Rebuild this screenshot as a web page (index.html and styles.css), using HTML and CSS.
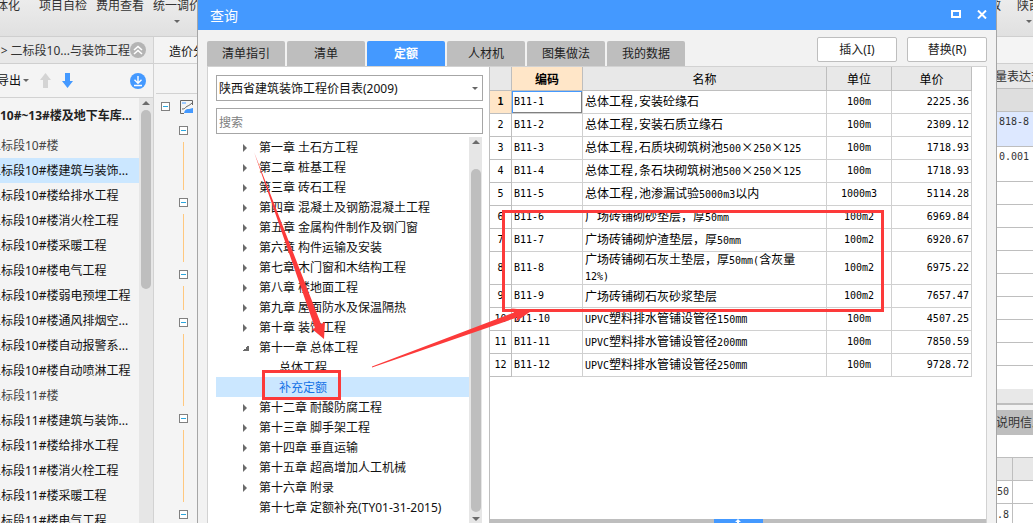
FILE: index.html
```html
<!DOCTYPE html>
<html lang="zh-CN">
<head>
<meta charset="utf-8">
<title>查询</title>
<link rel="stylesheet" href="styles.css">
</head>
<body>
<div class="app">
  <header class="ribbon">
    <div class="ribbon-items">
      <span class="ribbon-item">体化</span>
      <span class="ribbon-item">项目自检</span>
      <span class="ribbon-item">费用查看</span>
      <span class="ribbon-item">统一调价<i class="caret"></i></span>
    </div>
    <div class="ribbon-items ribbon-end">
      <span class="ribbon-item">效</span>
      <span class="ribbon-item">陕西<i class="caret"></i></span>
    </div>
  </header>
  <div class="workspace">
    <nav class="project">
      <div class="crumb">
        <span class="crumb-text">&gt; 二标段10...与装饰工程</span>
        <button class="round" aria-label="收起"><svg width="16" height="16" viewBox="0 0 16 16"><circle cx="8" cy="8" r="8" fill="#b4b4b4"/><path d="M4 8l4-3.5L12 8M4 12l4-3.5 4 3.5" fill="none" stroke="#fff" stroke-width="1.6"/></svg></button>
      </div>
      <div class="tools">
        <button class="export">导出<i class="caret"></i></button>
        <button class="round" aria-label="上移"><svg width="11" height="15" viewBox="0 0 11 15"><path d="M5.500 0L11 7H8v8H3V7H0z" fill="#d4d4d4"/></svg></button>
        <button class="round" aria-label="下移"><svg width="11" height="15" viewBox="0 0 11 15"><path d="M5.500 15L11 8H8V0H3v8H0z" fill="#4499ff"/></svg></button>
        <button class="round last" aria-label="下载"><svg width="16" height="16" viewBox="0 0 16 16"><circle cx="8" cy="8" r="8" fill="#4499ff"/><path d="M8 3v7M4.500 6.800L8 10.200l3.500-3.400M4 12.500h8" fill="none" stroke="#fff" stroke-width="1.400"/></svg></button>
      </div>
      <div class="project-body">
        <ul class="project-list">
          <li class="root">10#~13#楼及地下车库...</li>
          <li class="group">二标段10#楼</li>
          <li class="active">二标段10#楼建筑与装饰...</li>
          <li>二标段10#楼给排水工程</li>
          <li>二标段10#楼消火栓工程</li>
          <li>二标段10#楼采暖工程</li>
          <li>二标段10#楼电气工程</li>
          <li>二标段10#楼弱电预埋工程</li>
          <li>二标段10#楼通风排烟空...</li>
          <li>二标段10#楼自动报警系...</li>
          <li>二标段10#楼自动喷淋工程</li>
          <li class="group">二标段11#楼</li>
          <li>二标段11#楼建筑与装饰...</li>
          <li>二标段11#楼给排水工程</li>
          <li>二标段11#楼消火栓工程</li>
          <li>二标段11#楼采暖工程</li>
          <li>二标段11#楼电气工程</li>
        </ul>
        <div class="scroll"><i class="scroll-up"></i><i class="thumb thumb-short"></i></div>
      </div>
    </nav>
    <section class="outline">
      <div class="outline-tab">造价分析</div>
      <div class="outline-head"></div>
      <div class="outline-root">
        <i class="toggle"></i>
        <svg width="14" height="14" viewBox="0 0 14 14"><path d="M4 13.500H.500V.500h12V5" fill="none" stroke="#666"/><path d="M2 2h4v2H2z" fill="#9cc9ff"/><path d="M4 13c1-4 3-4 5-4s2-1 4-1v5z" fill="#4499ff"/><path d="M2 9c3 0 3-1 4-2s3-1 6-4" fill="none" stroke="#666"/></svg>
      </div>
      <div class="outline-tree">
        <i class="toggle"></i><i class="branch b2"></i>
        <i class="toggle"></i><i class="branch b2"></i>
        <i class="toggle"></i><i class="branch b1"></i>
        <i class="toggle"></i><i class="branch b3"></i>
        <i class="toggle"></i><i class="branch b3"></i>
        <i class="toggle"></i>
      </div>
    </section>
    <section class="side">
      <div class="side-bar"></div>
      <div class="side-head">量表达式</div>
      <div class="side-sub"></div>
      <div class="side-cell blue"><span class="m">818-8</span></div>
      <div class="side-cell"><span class="m">0.001</span></div>
      <div class="side-row"></div><div class="side-row"></div><div class="side-row"></div>
      <div class="side-row"></div><div class="side-row"></div><div class="side-row"></div>
      <div class="side-row"></div><div class="side-row"></div><div class="side-row plain"></div>
      <div class="side-scroll"></div>
      <div class="side-title">说明信息</div>
      <div class="side-gap"></div>
      <div class="mini head"><span></span><span></span></div>
      <div class="mini"><span class="m">50</span><span></span></div>
      <div class="mini"><span class="m">.8</span><span></span></div>
    </section>
  </div>
</div>

<div class="dialog" role="dialog" aria-labelledby="dlg-title">
  <div class="titlebar">
    <h1 id="dlg-title">查询</h1>
    <button class="win" aria-label="最大化"><svg width="10" height="8" viewBox="0 0 10 8"><path d="M1 1h8v6H1z" fill="none" stroke="#fff" stroke-width="2"/></svg></button>
    <button class="win" aria-label="关闭"><svg width="10" height="9" viewBox="0 0 10 9"><path d="M1 .500l8 8M9 .500l-8 8" stroke="#fff" stroke-width="2"/></svg></button>
  </div>
  <div class="dialog-top">
    <div class="tabs" role="tablist">
      <button class="tab" role="tab">清单指引</button>
      <button class="tab" role="tab">清单</button>
      <button class="tab on" role="tab" aria-selected="true">定额</button>
      <button class="tab" role="tab">人材机</button>
      <button class="tab" role="tab">图集做法</button>
      <button class="tab" role="tab">我的数据</button>
    </div>
    <div class="actions">
      <button class="action">插入(I)</button>
      <button class="action">替换(R)</button>
    </div>
  </div>
  <div class="panes">
    <div class="catalog">
      <div class="fields">
        <div class="book">
          <select class="field" aria-label="定额库"><option>陕西省建筑装饰工程价目表(2009)</option></select>
          <i class="caret"></i>
        </div>
        <input class="field" type="text" placeholder="搜索" aria-label="搜索">
      </div>
      <div class="tree-wrap">
        <ul class="tree">
          <li><i class="closed"></i>第一章 土石方工程</li>
          <li><i class="closed"></i>第二章 桩基工程</li>
          <li><i class="closed"></i>第三章 砖石工程</li>
          <li><i class="closed"></i>第四章 混凝土及钢筋混凝土工程</li>
          <li><i class="closed"></i>第五章 金属构件制作及钢门窗</li>
          <li><i class="closed"></i>第六章 构件运输及安装</li>
          <li><i class="closed"></i>第七章 木门窗和木结构工程</li>
          <li><i class="closed"></i>第八章 楼地面工程</li>
          <li><i class="closed"></i>第九章 屋面防水及保温隔热</li>
          <li><i class="closed"></i>第十章 装饰工程</li>
          <li><i class="open"></i>第十一章 总体工程</li>
          <li class="child">总体工程</li>
          <li class="child picked">补充定额</li>
          <li><i class="closed"></i>第十二章 耐酸防腐工程</li>
          <li><i class="closed"></i>第十三章 脚手架工程</li>
          <li><i class="closed"></i>第十四章 垂直运输</li>
          <li><i class="closed"></i>第十五章 超高增加人工机械</li>
          <li><i class="closed"></i>第十六章 附录</li>
          <li><i class="none"></i>第十七章 定额补充(TY01-31-2015)</li>
        </ul>
        <div class="scroll tree-scroll"><i class="scroll-up"></i><i class="thumb thumb-long"></i><i class="scroll-down"></i></div>
      </div>
    </div>
    <div class="result">
      <table class="grid">
        <colgroup><col class="c-no"><col class="c-code"><col><col class="c-unit"><col class="c-price"></colgroup>
        <thead><tr><th></th><th class="hot">编码</th><th>名称</th><th>单位</th><th>单价</th></tr></thead>
        <tbody>
          <tr><th class="hot">1</th><td class="code cursor">B11-1</td><td>总体工程<span class="m">,</span>安装砼缘石</td><td class="unit">100m</td><td class="price">2225.36</td></tr>
          <tr><th>2</th><td class="code">B11-2</td><td>总体工程<span class="m">,</span>安装石质立缘石</td><td class="unit">100m</td><td class="price">2309.12</td></tr>
          <tr><th>3</th><td class="code">B11-3</td><td>总体工程<span class="m">,</span>石质块砌筑树池<span class="m">500</span><span class="x">×</span><span class="m">250</span><span class="x">×</span><span class="m">125</span></td><td class="unit">100m</td><td class="price">1718.93</td></tr>
          <tr><th>4</th><td class="code">B11-4</td><td>总体工程<span class="m">,</span>条石块砌筑树池<span class="m">500</span><span class="x">×</span><span class="m">250</span><span class="x">×</span><span class="m">125</span></td><td class="unit">100m</td><td class="price">1718.93</td></tr>
          <tr><th>5</th><td class="code">B11-5</td><td>总体工程<span class="m">,</span>池渗漏试验<span class="m">5000m3</span>以内</td><td class="unit">1000m3</td><td class="price">5114.28</td></tr>
          <tr><th>6</th><td class="code">B11-6</td><td>广场砖铺砌砂垫层，厚<span class="m">50mm</span></td><td class="unit">100m2</td><td class="price">6969.84</td></tr>
          <tr><th>7</th><td class="code">B11-7</td><td>广场砖铺砌炉渣垫层，厚<span class="m">50mm</span></td><td class="unit">100m2</td><td class="price">6920.67</td></tr>
          <tr class="tall"><th>8</th><td class="code">B11-8</td><td>广场砖铺砌石灰土垫层，厚<span class="m">50mm(</span>含灰量<span class="m">12%)</span></td><td class="unit">100m2</td><td class="price">6975.22</td></tr>
          <tr><th>9</th><td class="code">B11-9</td><td>广场砖铺砌石灰砂浆垫层</td><td class="unit">100m2</td><td class="price">7657.47</td></tr>
          <tr><th>10</th><td class="code">B11-10</td><td><span class="m">UPVC</span>塑料排水管铺设管径<span class="m">150</span>㎜</td><td class="unit">100m</td><td class="price">4507.25</td></tr>
          <tr><th>11</th><td class="code">B11-11</td><td><span class="m">UPVC</span>塑料排水管铺设管径<span class="m">200</span>㎜</td><td class="unit">100m</td><td class="price">7850.59</td></tr>
          <tr><th>12</th><td class="code">B11-12</td><td><span class="m">UPVC</span>塑料排水管铺设管径<span class="m">250</span>㎜</td><td class="unit">100m</td><td class="price">9728.72</td></tr>
        </tbody>
      </table>
      <div class="splitter"><button class="handle" aria-label="展开"><svg width="6" height="4" viewBox="0 0 6 4"><path d="M3 0l3 3H4v1H2V3H0z" fill="#fff"/></svg></button></div>
    </div>
  </div>
</div>

<svg class="marks" width="1033" height="523" viewBox="0 0 1033 523" aria-hidden="true">
  <g fill="#fc3a3a">
    <path d="M254 152L315 328l-3 1 12 10 1-17-4 2z"/>
    <path d="M372 367.500L517 317.500l-1 4 16-11-20-2 2 4L372 366.500z"/>
  </g>
  <g fill="none" stroke="#fc3a3a" stroke-width="3">
    <rect x="263.500" y="371.500" width="76" height="27"/>
    <rect x="503.500" y="211.500" width="379" height="99"/>
  </g>
</svg>
</body>
</html>
```
FILE: styles.css
```css
* { box-sizing: border-box; }
html, body { height: 100%; }
body {
  margin: 0;
  overflow: hidden;
  position: relative;
  background: #f4f4f4;
  color: #111;
  font: 12px/20px "Noto Sans", "Noto Sans CJK SC", sans-serif;
}
button, input, select { font: inherit; color: inherit; margin: 0; padding: 0; border: 0; background: none; }
ul { list-style: none; margin: 0; padding: 0; }
i { display: block; flex: none; }

.app { height: 100%; display: flex; flex-direction: column; }
.caret { border: 3px solid transparent; border-top-color: #666; border-bottom: 0; }

/* Ribbon */
.ribbon {
  flex: none; height: 37px; overflow: hidden;
  display: flex; justify-content: space-between;
  background: linear-gradient(#ececec, #e0e0e0);
  border-bottom: 1px solid #cfcfcf;
}
.ribbon-items { display: flex; margin-left: -4px; margin-top: -4px; color: #333; white-space: nowrap; }
.ribbon-item { display: flex; flex-direction: column; align-items: center; gap: 4px; margin-right: 9px; }
.ribbon-item:first-child { margin-right: 19px; }
.ribbon-end { margin-right: -8px; }
.ribbon-end .ribbon-item { margin-right: 0; }
.ribbon-end .ribbon-item:first-child { margin-right: 16px; }

.workspace { flex: 1; min-height: 0; display: flex; }

/* Project navigation */
.project { flex: none; width: 154px; display: flex; flex-direction: column; border-right: 1px solid #d2d2d2; overflow: hidden; }
.crumb { flex: none; height: 27px; display: flex; align-items: center; background: #e8e8e8; border-bottom: 1px solid #cfcfcf; color: #333; white-space: nowrap; }
.crumb-text { width: 130px; padding-top: 2px; text-align: right; }
.round { display: flex; flex: none; }
.tools { flex: none; height: 34px; display: flex; align-items: center; gap: 11px; padding-right: 7px; border-bottom: 1px solid #d2d2d2; }
.export { display: flex; align-items: center; gap: 2px; margin-left: -3px; }
.last { margin-left: auto; }
.project-body { flex: 1; min-height: 0; display: flex; }
.project-list { flex: 1; min-width: 0; overflow: hidden; }
.project-list li { height: 25px; line-height: 26px; text-indent: -11px; white-space: nowrap; }
.project-list .root { height: 35px; line-height: 35px; text-indent: 0; font-weight: bold; color: #222; }
.project-list .group { color: #444; }
.project-list .active { background: #cbe7ff; }

.scroll { flex: none; width: 14px; background: #e6e6e6; display: flex; flex-direction: column; align-items: center; }
.scroll-up { margin: 3px 0 5px; border: 4px solid transparent; border-bottom-color: #6b6b6b; border-top: 0; }
.thumb { width: 10px; border-radius: 5px; background: #bebebe; }
.thumb-short { height: 42%; }

/* Outline */
.outline { flex: none; width: 44px; overflow: hidden; }
.outline-tab { height: 27px; line-height: 29px; padding-left: 15px; border-bottom: 1px solid #d2d2d2; white-space: nowrap; }
.outline-head { height: 30px; margin-left: 2px; border-bottom: 1px solid #d2d2d2; }
.outline-root { height: 25px; padding-left: 7px; display: flex; align-items: center; gap: 10px; }
.outline-tree { padding: 7px 0 0 25px; display: flex; flex-direction: column; gap: 7px; }
.toggle { width: 9px; height: 9px; border: 1px solid #808080; background: linear-gradient(#2ba6dd, #2ba6dd) center / 5px 1px no-repeat #fff; }
.branch { width: 1px; margin: 0 0 1px 4px; background: #ffc87f; }
.b1 { height: 24px; }
.b2 { height: 48px; }
.b3 { height: 72px; }

/* Right strip */
.side { flex: none; width: 37px; margin-left: auto; overflow: hidden; background: #fff; white-space: nowrap; color: #333; }
.side-bar { height: 27px; background: #f4f4f4; border-bottom: 1px solid #cfcfcf; }
.side-head { height: 25px; line-height: 26px; background: #e8e8e8; border-bottom: 1px solid #bebebe; text-indent: -1px; }
.side-sub { height: 23px; background: #dedede; border-bottom: 1px solid #bebebe; }
.side-cell { height: 35px; line-height: 18px; padding-left: 3px; border-bottom: 1px solid #bebebe; }
.blue { background: #dde8ff; }
.side-row { height: 23px; border-bottom: 1px solid #bebebe; }
.plain { border: 0; }
.side-scroll { height: 21px; background: #f2f2f2; border-top: 14px solid #e8e8e8; box-shadow: inset 0 2px #bebebe; }
.side-title { height: 25px; line-height: 25px; background: #bebebe; }
.side-gap { height: 23px; border-bottom: 1px solid #bebebe; }
.mini { height: 23px; display: flex; line-height: 22px; border-bottom: 1px solid #bebebe; }
.mini span:first-child { width: 17px; padding-right: 3px; text-align: right; border-right: 1px solid #bebebe; }
.head { background: #e8e8e8; }

/* Dialog window */
.dialog {
  position: absolute; top: 0; bottom: 0; left: 197px; right: 36px;
  display: flex; flex-direction: column; overflow: hidden;
  background: #f2f2f2; border: 1px solid #a6a6a6; border-top: 0; border-bottom: 0;
}
.titlebar { flex: none; height: 30px; padding: 0 9px 2px 12px; display: flex; align-items: center; gap: 16px; background: #4499ff; color: #fff; }
.titlebar h1 { flex: 1; margin: 0; padding-top: 4px; font-size: 14px; font-weight: normal; line-height: 20px; }
.win { display: flex; }
.dialog-top { flex: none; height: 36px; display: flex; justify-content: space-between; padding: 0 9px; }
.tabs { display: flex; align-items: flex-end; gap: 2px; }
.tab { width: 78px; height: 25px; border-radius: 2px 2px 0 0; background: #bebebe; color: #222; }
.on { background: #4499ff; color: #fff; font-weight: bold; }
.actions { display: flex; gap: 10px; padding-top: 7px; }
.action { width: 80px; height: 25px; border: 1px solid #bebebe; border-radius: 2px; background: #fff; color: #222; }
.panes { flex: 1; min-height: 0; margin: 0 9px; display: flex; background: #fff; border: 1px solid #d2d2d2; border-bottom: 0; }

/* Catalogue */
.catalog { flex: none; width: 281px; padding-left: 8px; display: flex; flex-direction: column; }
.fields { flex: none; padding: 8px 6px 3px 0; display: flex; flex-direction: column; gap: 7px; }
.field { width: 100%; height: 26px; padding: 2px 2px 0; border: 1px solid #a6a6a6; border-radius: 0; background: #fff; appearance: none; }
.field::placeholder { color: #808080; opacity: 1; }
.book { display: flex; align-items: center; }
.book .caret { margin-left: -11px; margin-right: 5px; pointer-events: none; position: relative; }
.tree-wrap { flex: 1; min-height: 0; display: flex; padding-right: 7px; }
.tree { flex: 1; overflow: hidden; }
.tree li { height: 20px; padding-top: 1px; display: flex; align-items: center; white-space: nowrap; }
.tree i { width: 16px; margin-left: 27px; }
.closed::before { content: ""; display: block; width: 0; border: 4px solid transparent; border-left-color: #6b6b6b; border-right: 0; }
.open::before { content: ""; display: block; width: 6px; height: 6px; background: linear-gradient(135deg, transparent 50%, #6b6b6b 50%); }
.tree .child { padding-left: 63px; }
.tree .picked { background: #cbe7ff; color: #1673e6; }
.tree-scroll { width: 13px; }
.tree-scroll .scroll-up { margin-bottom: 25px; }
.thumb-long { flex: 1; }
.scroll-down { margin: 5px 0 2px; border: 4px solid transparent; border-top-color: #6b6b6b; border-bottom: 0; }

/* Result table */
.result { flex: 1; min-width: 0; display: flex; flex-direction: column; border-left: 1px solid #bebebe; }
.grid { width: calc(100% - 14px); table-layout: fixed; border-collapse: separate; border-spacing: 0; color: #000; font: 12px/14px "Noto Sans CJK SC", sans-serif; }
.c-no { width: 22px; }
.c-code { width: 71px; }
.c-unit { width: 65px; }
.c-price { width: 80px; }
.grid th, .grid td { height: 23px; padding: 0 10px 0 2px; border: 1px solid #d0d0d0; border-width: 0 1px 1px 0; }
.grid th { padding: 0; font-weight: normal; border-color: #bebebe; }
.grid thead th { height: 24px; background: #e8e8e8; }
.grid .hot { background: #ffe6c8; font-weight: bold; }
.grid tbody th, .m, .grid .code, .grid .unit, .grid .price { font-family: "DejaVu Sans Mono", monospace; font-size: 10px; }
.grid .tall td { height: 33px; }
.grid .unit { text-align: center; padding: 0; }
.grid .price { text-align: right; padding: 0 2px; }
.grid .cursor { box-shadow: inset 1px 1px #4499ff, inset -1px -1px #808080; }
.x { display: inline-block; width: 12px; text-align: center; }
.splitter { flex: none; height: 4px; margin-top: auto; display: flex; justify-content: center; background: #bebebe; }
.handle { width: 49px; display: flex; justify-content: center; background: #4499ff; }

/* Annotation strokes above the window */
.marks { position: absolute; top: 0; left: 0; pointer-events: none; }
```
